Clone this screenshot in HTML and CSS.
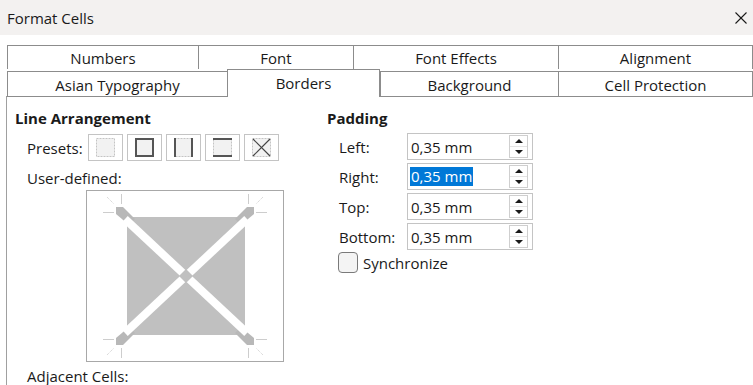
FILE: index.html
```html
<!DOCTYPE html>
<html lang="en">
<head>
    <meta charset="UTF-8">
    <meta name="viewport" content="width=device-width, initial-scale=1.0">
    <title>Format Cells</title>
    <link rel="stylesheet" href="styles.css">
</head>
<body>
    <div class="titlebar">
        <span class="title">Format Cells</span>
        <svg class="close" width="12" height="12" viewBox="0 0 12 12" fill="none" stroke="#1a1a1a" stroke-width="1.1">
            <line x1="0.5" y1="0.5" x2="11.5" y2="11.5"/>
            <line x1="11.5" y1="0.5" x2="0.5" y2="11.5"/>
        </svg>
    </div>

    <div class="tabs">
        <div class="tab-row row-top">
            <div class="tab w-numbers">Numbers</div>
            <div class="tab w-font">Font</div>
            <div class="tab w-effects">Font Effects</div>
            <div class="tab w-rest last">Alignment</div>
        </div>
        <div class="tab-row row-bottom">
            <div class="tab w-asian">Asian Typography</div>
            <div class="tab w-borders active">Borders</div>
            <div class="tab w-background">Background</div>
            <div class="tab w-rest last">Cell Protection</div>
        </div>
    </div>

    <div class="panel">
        <div class="col-left">
            <h2>Line Arrangement</h2>
            <div class="presets">
                <span class="label">Presets:</span>
                <div class="preset-list">
                    <div class="preset">
                        <svg width="21" height="21" viewBox="0 0 21 21">
                            <rect x="1.5" y="1.5" width="18" height="18" fill="#f2f2f2" stroke="#c4c4c4" stroke-dasharray="2 1"/>
                        </svg>
                    </div>
                    <div class="preset">
                        <svg width="21" height="21" viewBox="0 0 21 21">
                            <rect x="2" y="2" width="17" height="17" fill="#f2f2f2" stroke="#555" stroke-width="2"/>
                        </svg>
                    </div>
                    <div class="preset">
                        <svg width="21" height="21" viewBox="0 0 21 21">
                            <rect x="1.5" y="1.5" width="18" height="18" fill="#f2f2f2" stroke="#c4c4c4" stroke-dasharray="2 1"/>
                            <line x1="2" y1="1" x2="2" y2="20" stroke="#555" stroke-width="2"/>
                            <line x1="19" y1="1" x2="19" y2="20" stroke="#555" stroke-width="2"/>
                        </svg>
                    </div>
                    <div class="preset">
                        <svg width="21" height="21" viewBox="0 0 21 21">
                            <rect x="1.5" y="1.5" width="18" height="18" fill="#f2f2f2" stroke="#c4c4c4" stroke-dasharray="2 1"/>
                            <line x1="1" y1="2" x2="20" y2="2" stroke="#555" stroke-width="2"/>
                            <line x1="1" y1="19" x2="20" y2="19" stroke="#555" stroke-width="2"/>
                        </svg>
                    </div>
                    <div class="preset">
                        <svg width="21" height="21" viewBox="0 0 21 21">
                            <rect x="1.5" y="1.5" width="18" height="18" fill="#f2f2f2" stroke="#c4c4c4" stroke-dasharray="2 1"/>
                            <line x1="2" y1="2" x2="19" y2="19" stroke="#444" stroke-width="1.2"/>
                            <line x1="19" y1="2" x2="2" y2="19" stroke="#444" stroke-width="1.2"/>
                        </svg>
                    </div>
                </div>
            </div>
            <div class="label user-label">User-defined:</div>
            <div class="frame">
                <svg width="196" height="170" viewBox="0 0 196 170">
                    <!-- corner guides -->
                    <g stroke="#cdcdcd" stroke-width="1" fill="none">
                        <line x1="34.5" y1="3" x2="34.5" y2="13"/>
                        <line x1="16" y1="21.5" x2="27" y2="21.5"/>
                        <line x1="20" y1="6" x2="27" y2="13" stroke-dasharray="1 1"/>
                        <line x1="161.5" y1="3" x2="161.5" y2="13"/>
                        <line x1="169" y1="21.5" x2="180" y2="21.5"/>
                        <line x1="176" y1="6" x2="169" y2="13" stroke-dasharray="1 1"/>
                        <line x1="34.5" y1="157" x2="34.5" y2="167"/>
                        <line x1="16" y1="148.5" x2="27" y2="148.5"/>
                        <line x1="20" y1="164" x2="27" y2="157" stroke-dasharray="1 1"/>
                        <line x1="161.5" y1="157" x2="161.5" y2="167"/>
                        <line x1="169" y1="148.5" x2="180" y2="148.5"/>
                        <line x1="176" y1="164" x2="169" y2="157" stroke-dasharray="1 1"/>
                    </g>
                    <!-- cell -->
                    <rect x="40" y="26" width="118" height="118" fill="#c0c0c0"/>
                    <!-- diagonal stubs -->
                    <g fill="#b8b8b8">
                        <polygon points="29,16 36,16 48,28 42,34 29,23"/>
                        <polygon points="167,16 160,16 148,28 154,34 167,23"/>
                        <polygon points="29,154 36,154 48,142 42,136 29,147"/>
                        <polygon points="167,154 160,154 148,142 154,136 167,147"/>
                    </g>
                    <!-- diagonal gaps -->
                    <g stroke="#ffffff" stroke-width="8">
                        <line x1="38" y1="28" x2="160" y2="142"/>
                        <line x1="160" y1="28" x2="38" y2="142"/>
                    </g>
                    <polygon points="99,78 106,85 99,92 92,85" fill="#c0c0c0"/>
                </svg>
            </div>
            <div class="label adjacent-label">Adjacent Cells:</div>
        </div>

        <div class="col-right">
            <h2>Padding</h2>
            <div class="padding-list">
                <div class="spin-row">
                    <span class="label">Left:</span>
                    <div class="spin-field">
                        <span class="value">0,35 mm</span>
                        <div class="spin-buttons"><span class="arrow up"></span><span class="arrow down"></span></div>
                    </div>
                </div>
                <div class="spin-row">
                    <span class="label">Right:</span>
                    <div class="spin-field">
                        <span class="value selected">0,35 mm</span>
                        <div class="spin-buttons"><span class="arrow up"></span><span class="arrow down"></span></div>
                    </div>
                </div>
                <div class="spin-row">
                    <span class="label">Top:</span>
                    <div class="spin-field">
                        <span class="value">0,35 mm</span>
                        <div class="spin-buttons"><span class="arrow up"></span><span class="arrow down"></span></div>
                    </div>
                </div>
                <div class="spin-row">
                    <span class="label">Bottom:</span>
                    <div class="spin-field">
                        <span class="value">0,35 mm</span>
                        <div class="spin-buttons"><span class="arrow up"></span><span class="arrow down"></span></div>
                    </div>
                </div>
            </div>
            <label class="checkbox-row">
                <span class="checkbox"></span>
                <span>Synchronize</span>
            </label>
        </div>
    </div>
</body>
</html>
```

FILE: styles.css
```css
* {
    margin: 0;
    padding: 0;
    box-sizing: border-box;
}

body {
    font-family: "Open Sans", "Noto Sans", sans-serif;
    font-size: 15px;
    line-height: 20px;
    color: #1a1a1a;
    background: #ffffff;
    width: 753px;
    height: 385px;
    overflow: hidden;
}

.titlebar {
    height: 35px;
    background-color: #f3f1f0;
    display: flex;
    align-items: center;
    justify-content: space-between;
    padding: 0 6px 0 7px;
}

.close {
    margin-top: 1px;
}

/* tabs */

.tabs {
    margin: 10px 0 0 7px;
}

.tab-row {
    display: flex;
}

.tab {
    border-left: 1px solid #8c8c8c;
    border-top: 1px solid #8c8c8c;
    text-align: center;
    white-space: nowrap;
}

.tab.last {
    border-right: 1px solid #8c8c8c;
}

.row-top .tab {
    height: 24px;
    line-height: 24px;
}

.row-bottom {
    height: 27px;
    align-items: flex-end;
}

.row-bottom .tab {
    height: 25px;
    line-height: 27px;
}

.row-bottom .tab.active {
    height: 28px;
    line-height: 27px;
    border-right: 1px solid #8c8c8c;
    background-color: #ffffff;
    margin-bottom: -1px;
    position: relative;
    z-index: 1;
}

.w-numbers { width: 191px; }
.w-font { width: 155px; }
.w-effects { width: 205px; }
.w-asian { width: 220px; }
.w-borders { width: 153px; }
.w-background { width: 178px; }
.w-rest { flex: 1; }

/* panel */

.panel {
    margin-left: 6px;
    border-top: 1px solid #8c8c8c;
    border-left: 1px solid #a0a0a0;
    height: 300px;
    padding: 11px 0 0 8px;
    display: flex;
}

h2 {
    font-size: 15px;
    font-weight: 700;
    line-height: 20px;
}

.col-left {
    width: 312px;
}

.presets {
    display: flex;
    align-items: center;
    margin: 6px 0 0 12px;
}

.presets .label {
    width: 61px;
}

.preset-list {
    display: flex;
    gap: 4px;
}

.preset {
    width: 35px;
    height: 27px;
    border: 1px solid #c4c4c4;
    display: flex;
    align-items: center;
    justify-content: center;
}

.preset svg {
    display: block;
}

.user-label {
    margin: 7px 0 0 12px;
}

.frame {
    margin: 2px 0 0 71px;
    width: 198px;
    height: 172px;
    border: 1px solid #a8a8a8;
}

.frame svg {
    display: block;
}

.adjacent-label {
    margin: 4px 0 0 12px;
}

/* padding */

.padding-list {
    display: flex;
    flex-direction: column;
    gap: 3px;
    margin-top: 5px;
}

.spin-row {
    display: flex;
    align-items: center;
    padding-left: 12px;
}

.spin-row .label {
    width: 68px;
}

.spin-field {
    width: 126px;
    height: 27px;
    border: 1px solid #c4c4c4;
    display: flex;
    align-items: center;
    justify-content: space-between;
    padding: 0 4px 0 2px;
}

.value {
    padding: 0 1px;
}

.value.selected {
    background-color: #0078d7;
    color: #ffffff;
    line-height: 19px;
}

.spin-buttons {
    width: 19px;
    height: 23px;
    border: 1px solid #cfcfcf;
    display: flex;
    flex-direction: column;
}

.arrow {
    flex: 1;
    display: flex;
    align-items: center;
    justify-content: center;
}

.arrow.up {
    border-bottom: 1px solid #e4e4e4;
}

.arrow::before {
    content: "";
    width: 0;
    height: 0;
    border-left: 4px solid transparent;
    border-right: 4px solid transparent;
}

.arrow.up::before {
    border-bottom: 4px solid #1a1a1a;
}

.arrow.down::before {
    border-top: 4px solid #1a1a1a;
}

.checkbox-row {
    display: flex;
    align-items: center;
    gap: 5px;
    margin: 2px 0 0 11px;
}

.checkbox {
    width: 20px;
    height: 21px;
    border: 1px solid #7a7a7a;
    border-radius: 4px;
    background-color: #f4f4f4;
}
```
